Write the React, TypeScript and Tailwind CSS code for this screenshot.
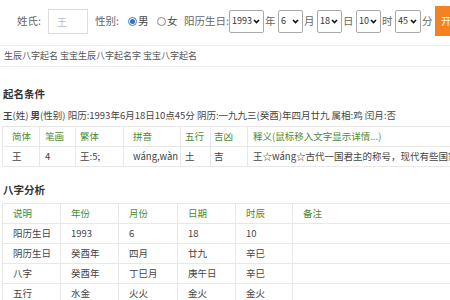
import React from 'react';

const font = { fontFamily: '"Noto Sans CJK SC", "Noto Sans", sans-serif' };

function Select({ value, w }: { value: string; w: string }) {
  return (
    <div className={`flex items-center justify-between h-[23px] border border-[#a9a9a9] rounded-[2px] bg-white pl-[2px] pr-[3px] text-[9px] text-[#333] shrink-0 ${w}`}>
      <span>{value}</span>
      <svg width="7" height="5" viewBox="0 0 7 5">
        <path d="M1 1 L3.5 3.6 L6 1" stroke="#111" strokeWidth="1.6" fill="none" />
      </svg>
    </div>
  );
}

function Unit({ children }: { children: React.ReactNode }) {
  return <span className="w-[14px] shrink-0 pl-[1px]">{children}</span>;
}

const t1Cols = ['w-[37px] pl-[9px]', 'w-[36px] pl-[5px]', 'w-[48px] pl-[4px]', 'w-[57px] pl-[9px]', 'w-[30px] pl-[4px]', 'w-[37px] pl-[3px]', 'w-[260px] pl-[5px]'];
const t1Head = ['简体', '笔画', '繁体', '拼音', '五行', '吉凶', '释义(鼠标移入文字显示详情...)'];
const t1Row = ['王', '4', '王:5;', 'wáng,wàn', '土', '吉', '王☆wáng☆古代一国君主的称号，现代有些国家'];

const t2Cols = ['w-[58px]', 'w-[58px]', 'w-[59px]', 'w-[58px]', 'w-[57px]', 'w-[200px]'];
const t2Head = ['说明', '年份', '月份', '日期', '时辰', '备注'];
const t2Rows = [
  ['阳历生日', '1993', '6', '18', '10', ''],
  ['阴历生日', '癸酉年', '四月', '廿九', '辛巳', ''],
  ['八字', '癸酉年', '丁巳月', '庚午日', '辛巳', ''],
  ['五行', '水金', '火火', '金火', '金火', ''],
];

export default function App() {
  return (
    <div className="w-[450px] h-[300px] overflow-hidden bg-white text-[#555]" style={font}>
      {/* top form */}
      <div className="flex items-center h-[42px] pl-[17px] text-[10.5px] text-[#666] whitespace-nowrap">
        <span className="w-[26px] shrink-0">姓氏:</span>
        <div className="ml-[5px] w-[40px] h-[25px] shrink-0 border border-[#ddd] flex items-center pl-[8px] text-[#bbb] text-[10px]">王</div>
        <span className="ml-[7px] w-[25px] shrink-0">性别:</span>
        <span className="ml-[8px] w-[9px] h-[9px] shrink-0 rounded-full border border-[#3b7dd8] flex items-center justify-center">
          <span className="w-[5px] h-[5px] rounded-full bg-[#2f6fd0]" />
        </span>
        <span className="ml-[1px] w-[12px] shrink-0 text-[#444]">男</span>
        <span className="ml-[7px] w-[9px] h-[9px] shrink-0 rounded-full border border-[#888]" />
        <span className="ml-[1px] w-[12px] shrink-0 text-[#444]">女</span>
        <span className="ml-[5px] w-[45px] shrink-0">阳历生日:</span>
        <Select value="1993" w="w-[35px]" />
        <Unit>年</Unit>
        <Select value="6" w="w-[25px]" />
        <Unit>月</Unit>
        <Select value="18" w="w-[25px]" />
        <Unit>日</Unit>
        <Select value="10" w="w-[25px]" />
        <Unit>时</Unit>
        <Select value="45" w="w-[26px]" />
        <Unit>分</Unit>
        <div className="h-[30px] w-[50px] shrink-0 bg-[#f5821f] text-white flex items-center pl-[6px] text-[10.5px]">开始</div>
      </div>

      {/* tags */}
      <div className="mt-[3px] border-t border-b border-[#eee] h-[22px] flex items-center pl-[4px] text-[9px] text-[#555] whitespace-nowrap">
        生辰八字起名 宝宝生辰八字起名字 宝宝八字起名
      </div>

      <div className="pl-[3px] mt-[17px] h-[20px] leading-[20px] text-[10.5px] font-bold text-[#333]">起名条件</div>
      <div className="pl-[3px] mt-[4px] h-[14px] leading-[14px] text-[9.5px] text-[#444] whitespace-nowrap">
        <span className="font-bold">王</span>(姓) <span className="font-bold">男</span>(性别) 阳历:1993年6月18日10点45分 阴历:一九九三(癸酉)年四月廿九 属相:鸡 闰月:否
      </div>

      <div className="ml-[2px] mt-[4px] border-l border-t border-[#e8e8e8] w-[600px] text-[9.5px] whitespace-nowrap">
        <div className="flex h-[20px] border-b border-[#e8e8e8] text-[#4b8a2e]">
          {t1Head.map((h, i) => (
            <div key={i} className={`${t1Cols[i]} border-r border-[#e8e8e8] flex items-center shrink-0`}>{h}</div>
          ))}
        </div>
        <div className="flex h-[20px] border-b border-[#e8e8e8] text-[#444]">
          {t1Row.map((h, i) => (
            <div key={i} className={`${t1Cols[i]} border-r border-[#e8e8e8] flex items-center shrink-0 overflow-hidden`}>{h}</div>
          ))}
        </div>
      </div>

      <div className="pl-[3px] mt-[13px] h-[20px] leading-[20px] text-[10.5px] font-bold text-[#333]">八字分析</div>
      <div className="ml-[2px] mt-[3px] border-l border-t border-[#e8e8e8] w-[500px] text-[9.5px] whitespace-nowrap">
        <div className="flex h-[20px] border-b border-[#e8e8e8] text-[#4b8a2e]">
          {t2Head.map((h, i) => (
            <div key={i} className={`${t2Cols[i]} border-r border-[#e8e8e8] flex items-center pl-[10px] shrink-0`}>{h}</div>
          ))}
        </div>
        {t2Rows.map((r, ri) => (
          <div key={ri} className="flex h-[20px] border-b border-[#e8e8e8] text-[#444]">
            {r.map((c, i) => (
              <div key={i} className={`${t2Cols[i]} border-r border-[#e8e8e8] flex items-center pl-[10px] shrink-0`}>{c}</div>
            ))}
          </div>
        ))}
      </div>
    </div>
  );
}
